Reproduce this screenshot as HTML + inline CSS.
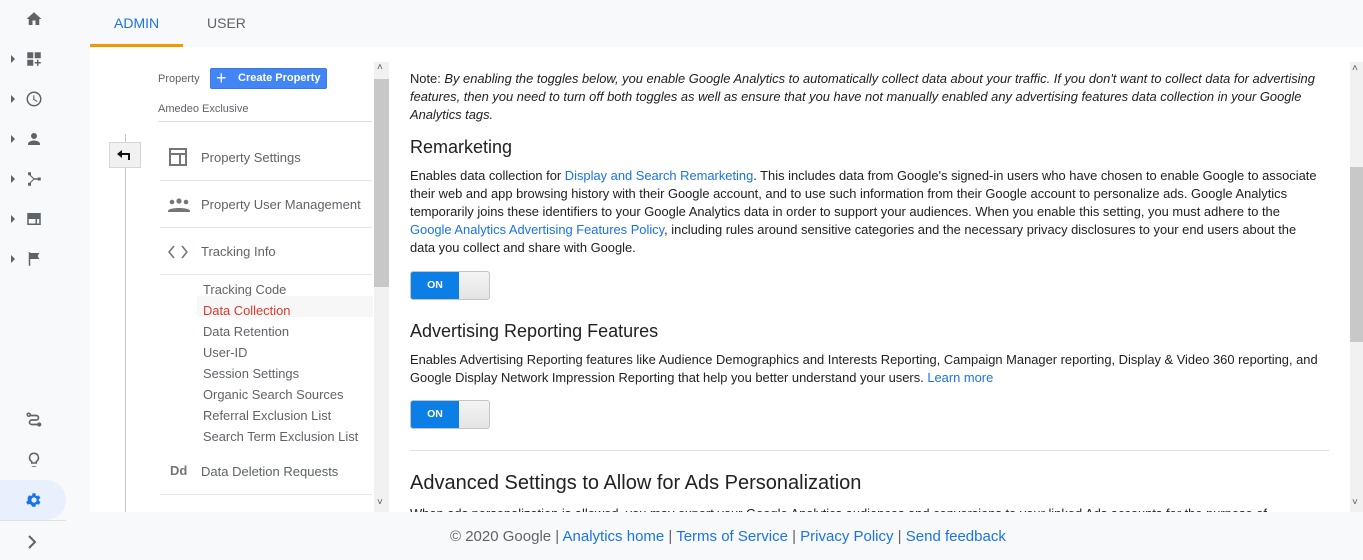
<!DOCTYPE html>
<html><head><meta charset="utf-8"><style>
*{margin:0;padding:0;box-sizing:border-box}
body{width:1363px;height:560px;overflow:hidden;background:#f8f9fa;font-family:"Liberation Sans",sans-serif;position:relative;color:#212121}
.a{position:absolute}
.nav svg{position:absolute;left:25px;width:18px;height:18px;fill:#5f6368}
.tri{position:absolute;left:11px;width:0;height:0;border-left:4px solid #5f6368;border-top:4px solid transparent;border-bottom:4px solid transparent}
.mi{position:absolute;left:201px;font-size:13px;color:#5f6368}
.sub{position:absolute;left:203px;font-size:12.9px;color:#5f6368}
.hr{position:absolute;left:160px;width:212px;height:1px;background:#e6e6e6}
.p{position:absolute;left:410px;font-size:12.9px;line-height:18px;color:#212121;white-space:nowrap}
.h{position:absolute;left:410px;font-size:18px;color:#212121}
a{color:#1a73e8;text-decoration:none}
.tg{position:absolute;left:410px;width:80px;height:29px;border:1px solid #c4c4c4;border-radius:3px;background:linear-gradient(#f4f4f4,#e4e4e4);overflow:hidden}
.tg div{position:absolute;left:0;top:0;width:48px;height:27px;background:#0b7fe6;color:#fff;font-size:10.5px;font-weight:bold;text-align:center;line-height:27px}
</style></head><body>
<div class="nav">
<svg style="top:10px" viewBox="0 0 24 24"><path d="M10 20v-6h4v6h5v-8h3L12 3 2 12h3v8z"/></svg>
<div class="tri" style="top:55px"></div><svg style="top:50px" viewBox="0 0 24 24"><path d="M3 3h8v8H3zM13 3h8v8h-8zM3 13h8v8H3zM16 13h2v3h3v2h-3v3h-2v-3h-3v-2h3z"/></svg>
<div class="tri" style="top:95px"></div><svg style="top:90px" viewBox="0 0 24 24"><path d="M12 2a10 10 0 100 20 10 10 0 000-20zm0 18a8 8 0 110-16 8 8 0 010 16zm.5-13H11v6l5 3 .8-1.2-4.3-2.6z"/></svg>
<div class="tri" style="top:135px"></div><svg style="top:130px" viewBox="0 0 24 24"><path d="M12 12a4 4 0 100-8 4 4 0 000 8zm0 2c-3 0-8 1.5-8 4.5V20h16v-1.5c0-3-5-4.5-8-4.5z"/></svg>
<div class="tri" style="top:175px"></div><svg style="top:170px" viewBox="0 0 24 24"><path d="M4 3h4v4H4zM4 17h4v4H4zM17 10h4v4h-4zM7 6l6 6-6 6-1-1 5-5-5-5zM12 11h6v2h-6z"/></svg>
<div class="tri" style="top:215px"></div><svg style="top:210px" viewBox="0 0 24 24"><path d="M3 4h18v16H3zm2 4v10h9v-6H5zm11 4v6h3v-6z"/></svg>
<div class="tri" style="top:255px"></div><svg style="top:250px" viewBox="0 0 24 24"><path d="M5 3h2v18H5zM7 4h12l-2 4 2 4H7z"/></svg>
<svg style="top:411px" viewBox="0 0 24 24" fill="none"><circle cx="5" cy="5" r="2" stroke="#5f6368" stroke-width="2" fill="none"/><path d="M7 6h8a3 3 0 010 6H9a3 3 0 000 6h8" stroke="#5f6368" stroke-width="2.2" fill="none"/><circle cx="19" cy="18" r="2.8"/></svg>
<svg style="top:451px" viewBox="0 0 24 24"><path d="M9 21h6v-1H9zm3-19a7 7 0 00-4 12.7V17h8v-2.3A7 7 0 0012 2zm2.8 11.1l-.8.6V15h-4v-1.3l-.8-.6A5 5 0 1114.8 13.1z"/></svg>
</div>
<div class="a" style="left:0;top:480px;width:66px;height:40px;background:#e8f0fe;border-radius:0 20px 20px 0"></div>
<svg class="a" style="left:25px;top:491px;width:18px;height:18px" viewBox="0 0 24 24"><path fill="#1a73e8" d="M19.4 13a7.5 7.5 0 000-2l2.1-1.6-2-3.5-2.5 1a7 7 0 00-1.7-1L15 3h-4l-.4 2.7a7 7 0 00-1.7 1l-2.5-1-2 3.5L4.6 11a7.5 7.5 0 000 2l-2.1 1.6 2 3.5 2.5-1a7 7 0 001.7 1L11 21h4l.4-2.7a7 7 0 001.7-1l2.5 1 2-3.5zM13 15.5a3.5 3.5 0 110-7 3.5 3.5 0 010 7z" transform="translate(-1 0)"/></svg>
<div class="a" style="left:0;top:520px;width:66px;height:1px;background:#e0e0e0"></div>
<svg class="a" style="left:27px;top:535px;width:10px;height:14px" viewBox="0 0 10 14"><path d="M2 1l6 6-6 6" stroke="#5f6368" stroke-width="2" fill="none"/></svg>
<div class="a" style="left:114px;top:15px;font-size:14px;color:#1a73e8">ADMIN</div>
<div class="a" style="left:207px;top:15px;font-size:14px;color:#5f6368">USER</div>
<div class="a" style="left:90px;top:44px;width:93px;height:3px;background:#f29900"></div>
<div class="a" style="left:90px;top:47px;width:1273px;height:465px;background:#fff"></div>
<div class="a" style="left:125px;top:134px;width:1px;height:378px;background:#c8c8c8"></div>
<div class="a" style="left:109px;top:142px;width:32px;height:26px;background:#f1f1f1;border:1px solid #d6d6d6"></div>
<svg class="a" style="left:116px;top:148px;width:17px;height:13px" viewBox="0 0 17 13"><path d="M1 6l5-4v3h8v7h-2V7H6v3z" fill="#111"/></svg>
<div class="a" style="left:158px;top:73px;font-size:11px;color:#5f6368">Property</div>
<div class="a" style="left:210px;top:68px;width:117px;height:21px;background:#4285f4;border:1px solid #3a78e0;border-radius:2px;color:#fff;font-size:11px;font-weight:bold;line-height:19px;padding-left:27px">Create Property</div>
<div class="a" style="left:216px;top:70px;color:#fff;font-size:18px;line-height:16px">+</div>
<div class="a" style="left:158px;top:103px;font-size:11px;color:#5f6368">Amedeo Exclusive</div>
<div class="hr" style="left:158px;top:121px;width:214px;background:#ddd"></div>
<div class="a" style="left:169px;top:148px;width:18px;height:18px;border:2px solid #757575"></div>
<div class="a" style="left:169px;top:153px;width:18px;height:2px;background:#757575"></div>
<div class="a" style="left:179px;top:153px;width:2px;height:13px;background:#757575"></div>
<div class="mi" style="top:150px">Property Settings</div>
<div class="hr" style="top:180px"></div>
<svg class="a" style="left:167px;top:197px;width:24px;height:16px" viewBox="0 0 24 16"><circle cx="5" cy="5" r="2.3" fill="#757575"/><circle cx="12" cy="4" r="2.6" fill="#757575"/><circle cx="19" cy="5" r="2.3" fill="#757575"/><path d="M1 14c0-4 22-4 22 0v1H1z" fill="#757575"/></svg>
<div class="mi" style="top:197px">Property User Management</div>
<div class="hr" style="top:227px"></div>
<svg class="a" style="left:168px;top:245px;width:20px;height:14px" viewBox="0 0 20 14"><path d="M6 1L1 7l5 6M14 1l5 6-5 6" stroke="#757575" stroke-width="1.6" fill="none"/></svg>
<div class="mi" style="top:244px">Tracking Info</div>
<div class="hr" style="top:274px"></div>
<div class="sub" style="top:282px">Tracking Code</div>
<div class="a" style="left:197px;top:296px;width:176px;height:21px;background:#f7f7f7"></div>
<div class="sub" style="top:303px;color:#db3a2a">Data Collection</div>
<div class="sub" style="top:324px">Data Retention</div>
<div class="sub" style="top:345px">User-ID</div>
<div class="sub" style="top:366px">Session Settings</div>
<div class="sub" style="top:387px">Organic Search Sources</div>
<div class="sub" style="top:408px">Referral Exclusion List</div>
<div class="sub" style="top:429px">Search Term Exclusion List</div>
<div class="a" style="left:170px;top:463px;font-size:13px;font-weight:bold;color:#757575">Dd</div>
<div class="mi" style="top:464px">Data Deletion Requests</div>
<div class="hr" style="top:494px"></div>
<div class="a" style="left:374px;top:62px;width:15px;height:450px;background:#f1f1f1"></div>
<div class="a" style="left:374px;top:79px;width:15px;height:208px;background:#c8c8c8"></div>
<div class="a" style="left:377px;top:62px;font-size:10px;color:#555">&#x2C4;</div>
<div class="a" style="left:377px;top:497px;font-size:10px;color:#555">&#x2C5;</div>
<div class="a" style="left:1350px;top:62px;width:13px;height:450px;background:#f1f1f1"></div>
<div class="a" style="left:1350px;top:167px;width:13px;height:175px;background:#c8c8c8"></div>
<div class="a" style="left:1352px;top:63px;font-size:10px;color:#555">&#x2C4;</div>
<div class="a" style="left:1352px;top:497px;font-size:10px;color:#555">&#x2C5;</div>
<div class="p" style="top:70px">Note: <i>By enabling the toggles below, you enable Google Analytics to automatically collect data about your traffic. If you don't want to collect data for advertising<br>features, then you need to turn off both toggles as well as ensure that you have not manually enabled any advertising features data collection in your Google<br>Analytics tags.</i></div>
<div class="h" style="top:137px">Remarketing</div>
<div class="p" style="top:167px">Enables data collection for <a>Display and Search Remarketing</a>. This includes data from Google's signed-in users who have chosen to enable Google to associate<br>their web and app browsing history with their Google account, and to use such information from their Google account to personalize ads. Google Analytics<br>temporarily joins these identifiers to your Google Analytics data in order to support your audiences. When you enable this setting, you must adhere to the<br><a>Google Analytics Advertising Features Policy</a>, including rules around sensitive categories and the necessary privacy disclosures to your end users about the<br>data you collect and share with Google.</div>
<div class="tg" style="top:271px"><div>ON</div></div>
<div class="h" style="top:321px">Advertising Reporting Features</div>
<div class="p" style="top:351px">Enables Advertising Reporting features like Audience Demographics and Interests Reporting, Campaign Manager reporting, Display &amp; Video 360 reporting, and<br>Google Display Network Impression Reporting that help you better understand your users. <a>Learn more</a></div>
<div class="tg" style="top:400px"><div>ON</div></div>
<div class="a" style="left:410px;top:450px;width:919px;height:1px;background:#e0e0e0"></div>
<div class="a" style="left:410px;top:472px;font-size:20px;color:#212121">Advanced Settings to Allow for Ads Personalization</div>
<div class="a" style="left:410px;top:505px;width:935px;height:7px;overflow:hidden"><div class="p" style="left:0;top:0">When ads personalization is allowed, you may export your Google Analytics audiences and conversions to your linked Ads accounts for the purpose of</div></div>
<div class="a" style="left:450px;top:528px;font-size:15px;color:#5f6368;white-space:nowrap">© 2020 Google | <a>Analytics home</a> | <a>Terms of Service</a> | <a>Privacy Policy</a> | <a>Send feedback</a></div>
</body></html>
